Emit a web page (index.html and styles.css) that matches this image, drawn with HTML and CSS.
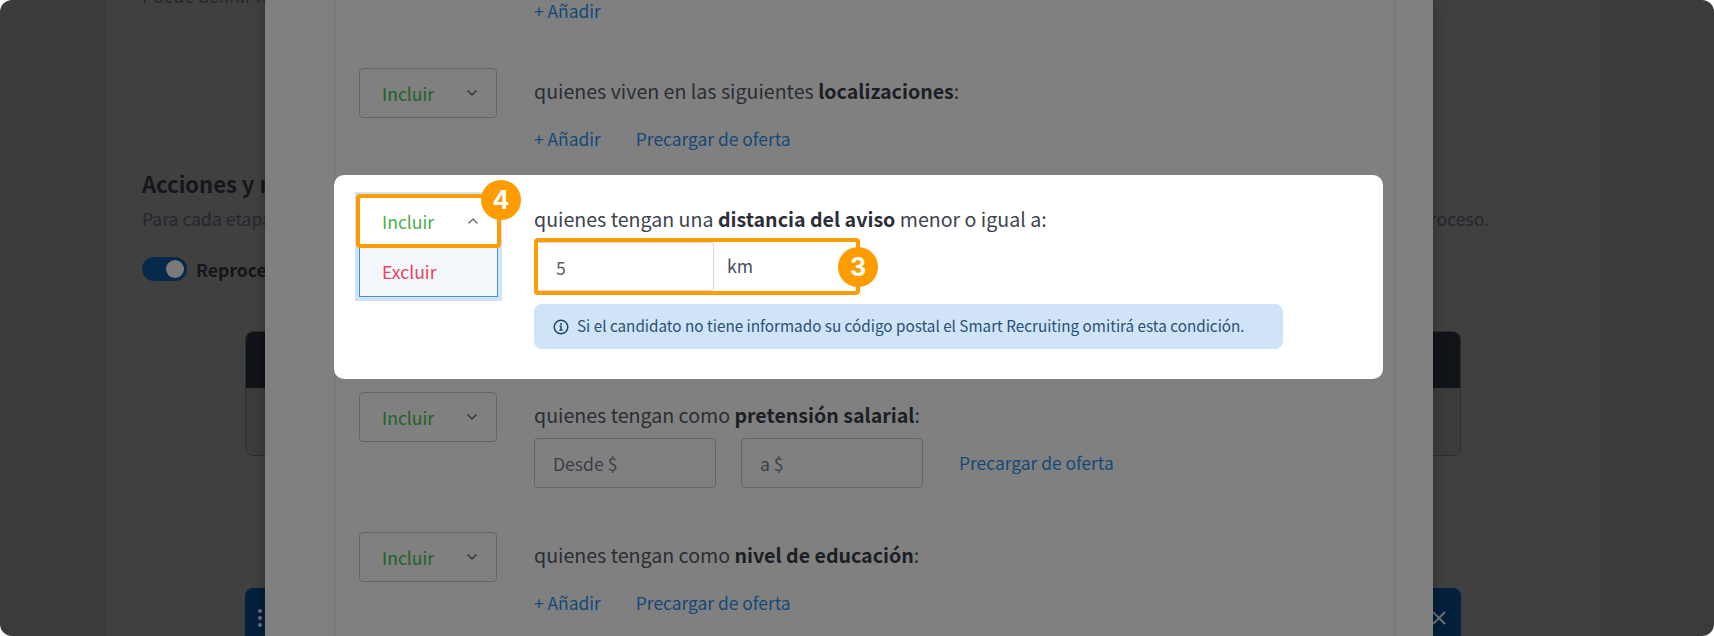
FILE: index.html
```html
<!DOCTYPE html>
<html lang="es">
<head>
<meta charset="utf-8">
<title>Smart Recruiting</title>
<link rel="stylesheet" href="styles.css">
</head>
<body>
<div class="page">
  <main class="card">
    <p class="line line-top">Puede definir nuevas reglas</p>
    <h2 class="heading">Acciones y mensajes</h2>
    <p class="line line-split"><span>Para cada etapa</span><span>del proceso.</span></p>
    <div class="toggle-row">
      <span class="toggle"><span class="knob"></span></span>
      <strong class="toggle-label">Reprocesar</strong>
    </div>
    <div class="stage">
      <div class="stage-head"></div>
      <div class="stage-body"></div>
    </div>
    <div class="bar">
      <svg class="bar-dots" width="6" height="20" viewBox="0 0 6 20"><circle cx="3" cy="3" r="2"/><circle cx="3" cy="10" r="2"/><circle cx="3" cy="17" r="2"/></svg>
      <svg class="bar-x" width="14" height="14" viewBox="0 0 14 14"><path d="M1 1l12 12M13 1L1 13"/></svg>
    </div>
  </main>

  <section class="modal">
    <div class="panel">
      <div class="row row-first">
        <div class="col-select"></div>
        <div class="col-main"><div class="links first-links"><a class="link">+ Añadir</a></div></div>
      </div>

      <div class="row row-two">
        <div class="col-select">
          <div class="select"><span class="include">Incluir</span><svg class="chev" width="12" height="8" viewBox="0 0 12 8"><path d="M1.5 1.5L6 6l4.5-4.5"/></svg></div>
        </div>
        <div class="col-main">
          <p class="label">quienes viven en las siguientes <b>localizaciones</b>:</p>
          <div class="links"><a class="link">+ Añadir</a><a class="link">Precargar de oferta</a></div>
        </div>
      </div>

      <div class="row row-focus">
        <div class="col-select">
          <div class="dropdown">
            <div class="select select-open"><span class="include">Incluir</span><svg class="chev" width="12" height="8" viewBox="0 0 12 8"><path d="M1.5 6.5L6 2l4.5 4.5"/></svg></div>
            <div class="option">Excluir</div>
            <div class="callout callout-select"><span class="badge badge-four">4</span></div>
          </div>
        </div>
        <div class="col-main">
          <p class="label">quienes tengan una <b>distancia del aviso</b> menor o igual a:</p>
          <div class="distance">
            <div class="distance-input">5</div>
            <div class="distance-unit">km</div>
            <span class="badge badge-three">3</span>
          </div>
          <div class="alert">
            <svg class="alert-icon" width="16" height="16" viewBox="0 0 16 16"><circle cx="8" cy="8" r="6.8"/><path d="M6.6 7.2H8v3.6M6.4 11h3.2"/><circle class="dot" cx="8" cy="4.9" r="1"/></svg>
            <span class="alert-text">Si el candidato no tiene informado su código postal el Smart Recruiting omitirá esta condición.</span>
          </div>
        </div>
      </div>

      <div class="row row-four">
        <div class="col-select">
          <div class="select"><span class="include">Incluir</span><svg class="chev" width="12" height="8" viewBox="0 0 12 8"><path d="M1.5 1.5L6 6l4.5-4.5"/></svg></div>
        </div>
        <div class="col-main">
          <p class="label">quienes tengan como <b>pretensión salarial</b>:</p>
          <div class="salary">
            <div class="field">Desde $</div>
            <div class="field">a $</div>
            <a class="link">Precargar de oferta</a>
          </div>
        </div>
      </div>

      <div class="row row-five">
        <div class="col-select">
          <div class="select"><span class="include">Incluir</span><svg class="chev" width="12" height="8" viewBox="0 0 12 8"><path d="M1.5 1.5L6 6l4.5-4.5"/></svg></div>
        </div>
        <div class="col-main">
          <p class="label">quienes tengan como <b>nivel de educación</b>:</p>
          <div class="links"><a class="link">+ Añadir</a><a class="link">Precargar de oferta</a></div>
        </div>
      </div>
    </div>
  </section>
</div>
</body>
</html>
```
FILE: styles.css
```css
* { box-sizing: border-box; }
html, body { margin: 0; padding: 0; background: #fff; }
body { font-family: "Noto Sans CJK SC", "Noto Sans", sans-serif; font-size: 20px; }
p, h2 { margin: 0; }

.page {
  position: relative;
  width: 1714px;
  height: 636px;
  overflow: hidden;
  border-radius: 12px;
  background: #3a3b3c;
}

/* dimmed page behind the modal */
.card {
  display: flow-root;
  width: 1494px;
  height: 636px;
  margin-left: 106px;
  padding: 0 111px 0 36px;
  background: #404040;
  color: #24252c;
}
.line { line-height: 28px; font-size: 17.6px; color: #25262d; }
.line-top { margin-top: -18px; }
.line-split { display: flex; justify-content: space-between; margin-top: 6px; }
.heading { margin-top: 157px; font-size: 22px; line-height: 32px; font-weight: 700; color: #15161b; }
.toggle-row { display: flex; align-items: center; gap: 9px; margin-top: 24px; height: 24px; }
.toggle { display: flex; justify-content: flex-end; align-items: center; width: 45px; height: 24px; padding-right: 3px; border-radius: 12px; background: #07294a; }
.knob { width: 18px; height: 18px; border-radius: 50%; background: #7a7a7a; }
.toggle-label { font-size: 17.6px; color: #15161b; }
.stage { width: 1216px; height: 125px; margin: 50px 0 0 103px; border-radius: 8px; overflow: hidden; border: 1px solid #2b2c2f; }
.stage-head { height: 56px; background: #101317; }
.stage-body { height: 68px; background: #3b3d3d; }
.bar { display: flex; justify-content: space-between; align-items: center; width: 1216px; height: 60px; margin: 132px 0 0 103px; padding: 0 15px 0 12px; border-radius: 8px; background: #04203c; }
.bar-dots { fill: #6a7280; }
.bar-x { fill: none; stroke: #6d6f72; stroke-width: 2; }

/* modal */
.modal {
  position: absolute;
  top: 0;
  left: 265px;
  width: 1168px;
  height: 636px;
  padding-left: 69px;
  background: #808080;
  box-shadow: 0 0 12px rgba(0, 0, 0, .3);
}
.panel {
  width: 1061px;
  height: 640px;
  margin-top: -2px;
  padding-right: 11px;
  border-left: 1px solid #767676;
  border-right: 1px solid #767676;
}
.row { display: flex; gap: 37px; padding-left: 24px; }
.col-select { flex: none; width: 138px; }
.col-main { flex: 1; min-width: 0; padding-top: 9px; }
.row-first { height: 28px; }
.row-first .col-main { padding-top: 0; }
.links.first-links { margin-top: -1px; }
.row-two { margin-top: 42px; }
.row-focus { margin: 22px 0 0 -1px; padding: 21px 0 30px 25px; height: 204px; border-radius: 10px; background: #fff; position: relative; }
.row-focus .col-main { padding-top: 9px; }
.row-four { margin-top: 13px; }
.row-five { margin-top: 44px; }

.select {
  display: flex;
  justify-content: space-between;
  align-items: center;
  height: 50px;
  padding: 1px 18px 0 22px;
  border: 1px solid #62646e;
  border-radius: 4px;
  font-size: 17.6px;
  line-height: 24px;
}
.include { color: #1f6228; }
.chev { fill: none; stroke: #33353d; stroke-width: 1.5; margin-top: -2px; }

.label { line-height: 28px; color: #2b2d34; font-size: 19.6px; }
.label b { color: #1c1e25; font-weight: 700; }
.links { display: flex; gap: 35px; margin-top: 20px; }
.link { font-size: 17.4px; line-height: 28px; color: #154878; }

.salary { display: flex; align-items: center; gap: 25px; margin-top: 9px; }
.salary .link { margin-left: 11px; }
.field {
  width: 182px;
  height: 50px;
  padding: 0 18px;
  border: 1px solid #62646e;
  border-radius: 4px;
  font-size: 17.6px;
  line-height: 50px;
  color: #3c3e48;
}

/* highlighted row */
.row-focus .label { color: #3e4350; }
.row-focus .label b { color: #2a2e3a; }
.dropdown { position: relative; width: 139px; height: 101px; background: #f3f6fa; border: 1px solid #3d93e0; box-shadow: 0 0 0 4px #cfe4f6; }
.select-open { background: #fff; border: 0; margin: -1px; height: 51px; border-radius: 0; padding-right: 19px; padding-left: 23px; }
.select-open .include { color: #4caf50; }
.select-open .chev { stroke: #6f7580; }
.option { padding: 14px 0 0 22px; font-size: 17.6px; line-height: 24px; color: #e8455c; }
.callout { position: absolute; border: 4px solid #ff9c00; border-radius: 4px; }
.callout-select { top: -3px; left: -4px; width: 145px; height: 54px; background: transparent; }
.badge {
  position: absolute;
  display: flex;
  align-items: center;
  justify-content: center;
  width: 40px;
  height: 40px;
  border-radius: 50%;
  background: #ff9c00;
  color: #fff;
  font-family: "Inter", "Liberation Sans", sans-serif;
  font-size: 25px;
  font-weight: 700;
  line-height: 1;
}
.badge-four { top: -18px; right: -24px; }
.distance {
  position: relative;
  display: flex;
  width: 326px;
  height: 57px;
  margin-top: 5px;
  border: 4px solid #ff9c00;
  border-radius: 4px;
}
.distance-input {
  width: 176px;
  height: 49px;
  padding-left: 18px;
  border: 1px solid #d4d7dc;
  border-left: 0;
  border-radius: 0 4px 4px 0;
  font-size: 17.6px;
  line-height: 49px;
  color: #5a5d66;
}
.distance-unit { padding-left: 13px; font-size: 17.6px; line-height: 47px; color: #4a4f5c; }
.badge-three { top: 5px; right: -22px; }
.alert {
  display: flex;
  align-items: center;
  gap: 8px;
  width: 749px;
  height: 45px;
  margin-top: 9px;
  padding-left: 19px;
  border-radius: 8px;
  background: #cfe4f6;
  font-size: 15.25px;
  color: #2a5078;
}
.alert-text { line-height: 20px; margin-top: -3px; }
.alert-icon { fill: none; stroke: #23466c; stroke-width: 1.5; flex: none; }
.alert-icon .dot { fill: #23466c; stroke: none; }
```
